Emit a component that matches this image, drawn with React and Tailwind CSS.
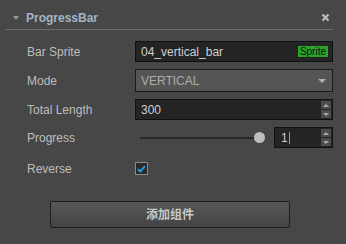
export default function App() {
  const font = { fontFamily: '"Liberation Sans", Arial, sans-serif' };

  const Spinner = () => (
    <div className="flex h-full w-[10px] flex-col gap-[1px] py-[1px]">
      <div className="flex flex-1 items-center justify-center bg-[#4d4d4d]">
        <div className="h-0 w-0 border-x-[3px] border-b-[3px] border-x-transparent border-b-[#aaa]" />
      </div>
      <div className="flex flex-1 items-center justify-center bg-[#4d4d4d]">
        <div className="h-0 w-0 border-x-[3px] border-t-[3px] border-x-transparent border-t-[#aaa]" />
      </div>
    </div>
  );

  return (
    <div className="h-[244px] w-[346px] overflow-hidden bg-[#474747] text-[12px]" style={font}>
      <div className="mx-[5px] mr-[13px] flex h-[30px] items-center border-b border-[#6b6b6b] pt-[6px]">
        <div className="ml-[8px] h-0 w-0 border-x-[3px] border-t-[4px] border-x-transparent border-t-[#9a9a9a]" />
        <span className="ml-[7px] font-bold text-[#a3b4c6]">ProgressBar</span>
        <svg className="ml-auto mr-[3px]" width="9" height="9" viewBox="0 0 9 9">
          <path d="M1.5 1.5 L7.5 7.5 M7.5 1.5 L1.5 7.5" stroke="#bdbdbd" strokeWidth="2.2" />
        </svg>
      </div>

      <div className="mt-[11px] flex flex-col pl-[27px] pr-[13px]">
        <div className="flex h-[21px] items-center">
          <span className="w-[108px] text-[#bdbdbd]">Bar Sprite</span>
          <div className="flex h-full flex-1 items-center border border-[#111] bg-[#242424] pl-[5px] pr-[4px]">
            <span className="text-[#d0d0d0]">04_vertical_bar</span>
            <span className="ml-auto flex h-[11px] items-center bg-[#2aa52a] px-[2px] text-[10px] leading-none text-[#0d0d0d]">Sprite</span>
          </div>
        </div>

        <div className="mt-[7px] flex h-[23px] items-center">
          <span className="w-[108px] text-[#bdbdbd]">Mode</span>
          <div className="flex h-full flex-1 items-center border border-[#1a1a1a] bg-[#555] pl-[5px] pr-[6px]">
            <span className="text-[#acacac]">VERTICAL</span>
            <div className="ml-auto h-0 w-0 border-x-[4px] border-t-[4px] border-x-transparent border-t-[#b0b0b0]" />
          </div>
        </div>

        <div className="mt-[7px] flex h-[21px] items-center">
          <span className="w-[108px] text-[#bdbdbd]">Total Length</span>
          <div className="flex h-full flex-1 items-center border border-[#111] bg-[#242424] pl-[5px] pr-[1px]">
            <span className="text-[#d0d0d0]">300</span>
            <div className="ml-auto h-full">
              <Spinner />
            </div>
          </div>
        </div>

        <div className="mt-[7px] flex h-[21px] items-center">
          <span className="w-[108px] text-[#bdbdbd]">Progress</span>
          <div className="relative ml-[5px] mr-[11px] flex h-full flex-1 items-center">
            <div className="h-[2px] flex-1 bg-[#2a2a2a]" />
            <div className="absolute right-[-2px] h-[11px] w-[11px] rounded-full bg-[#bdbdbd]" />
          </div>
          <div className="flex h-full w-[59px] items-center border border-[#111] bg-[#242424] pl-[6px] pr-[1px]">
            <span className="text-[#d0d0d0]">1</span>
            <div className="ml-[1px] h-[12px] w-[1px] bg-[#d68a4a]" />
            <div className="ml-auto h-full">
              <Spinner />
            </div>
          </div>
        </div>

        <div className="mt-[10px] flex h-[21px] items-center">
          <span className="w-[108px] text-[#bdbdbd]">Reverse</span>
          <div className="flex h-[13px] w-[13px] items-center justify-center border border-[#8a8a8a] bg-[#2a2a2a]">
            <svg width="9" height="8" viewBox="0 0 9 8">
              <path d="M1 4.2 L3.4 6.4 L8 1.2" stroke="#1e9ef0" strokeWidth="2" fill="none" />
            </svg>
          </div>
        </div>
      </div>

      <div className="ml-[50px] mt-[22px] flex h-[27px] w-[240px] items-center justify-center rounded-[2px] border border-[#1d1d1d] bg-gradient-to-b from-[#585858] to-[#444]">
        <span className="font-bold text-[#c8c8c8]" style={{ fontFamily: '"Liberation Sans", "Noto Sans CJK SC", sans-serif' }}>
          添加组件
        </span>
      </div>
    </div>
  );
}
